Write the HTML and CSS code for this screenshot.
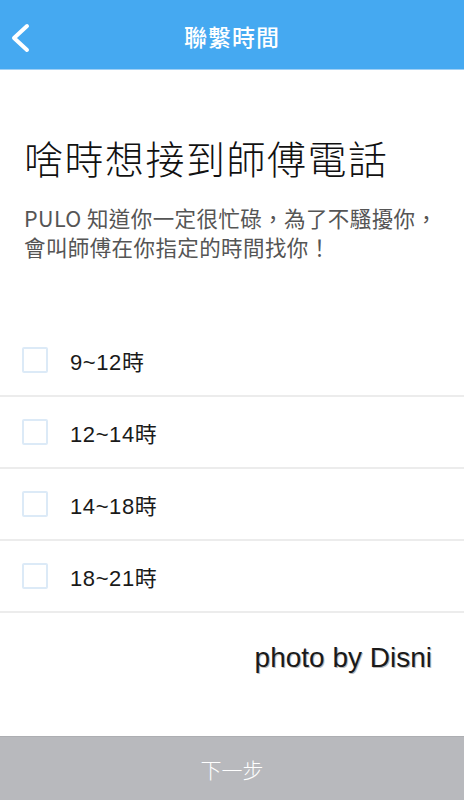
FILE: index.html
```html
<!DOCTYPE html>
<html lang="zh-Hant">
<head>
    <meta charset="UTF-8">
    <title>聯繫時間</title>
    <meta name="viewport" content="width=device-width, initial-scale=1.0">
    <link rel="stylesheet" href="styles.css">
</head>
<body>
    <div class="app">
        <header class="topbar">
            <svg class="back" width="24" height="32" viewBox="0 0 24 32">
                <polyline points="18,4 5,16 18,28" fill="none" stroke="#fff" stroke-width="4" stroke-linecap="round" stroke-linejoin="round"/>
            </svg>
            <div class="topbar-title">聯繫時間</div>
        </header>

        <main class="content">
            <h1 class="heading">啥時想接到師傅電話</h1>
            <p class="intro">PULO 知道你一定很忙碌，為了不騷擾你，<br>會叫師傅在你指定的時間找你！</p>

            <ul class="slots">
                <li class="slot"><span class="box"></span><span class="label">9~12時</span></li>
                <li class="slot"><span class="box"></span><span class="label">12~14時</span></li>
                <li class="slot"><span class="box"></span><span class="label">14~18時</span></li>
                <li class="slot"><span class="box"></span><span class="label">18~21時</span></li>
            </ul>

            <div class="credit">photo by Disni</div>
        </main>

        <button class="next">下一步</button>
    </div>
</body>
</html>
```

FILE: styles.css
```css
body {
    margin: 0;
    padding: 0;
    background: #fff;
    font-family: "Noto Sans CJK TC", "Noto Sans", sans-serif;
}
.app {
    width: 464px;
    height: 800px;
    display: flex;
    flex-direction: column;
}
.topbar {
    height: 69px;
    background: #45a9f1;
    border-bottom: 1px solid #9fd0f5;
    display: flex;
    align-items: center;
    justify-content: center;
    position: relative;
}
.back {
    position: absolute;
    left: 9px;
    top: 22px;
}
.topbar-title {
    color: #fff;
    font-size: 23px;
    font-weight: 500;
    letter-spacing: 1px;
    margin-top: 3px;
}
.content {
    flex: 1;
}
.heading {
    margin: 59px 0 0 24px;
    font-size: 39px;
    font-weight: 300;
    color: #111;
    line-height: 56px;
    letter-spacing: 1.5px;
}
.intro {
    margin: 18px 0 0 24px;
    font-size: 21.5px;
    line-height: 29px;
    color: #555;
    letter-spacing: 0.4px;
}
.slots {
    list-style: none;
    margin: 64px 0 0;
    padding: 0;
}
.slot {
    height: 70px;
    border-bottom: 2px solid #ececec;
    display: flex;
    align-items: center;
}
.box {
    width: 22px;
    height: 22px;
    margin-left: 22px;
    border: 2px solid #dceaf7;
    border-radius: 2px;
}
.label {
    margin-left: 22px;
    font-family: "Liberation Sans", "Noto Sans CJK TC", sans-serif;
    font-size: 22px;
    letter-spacing: 0.6px;
    color: #1a1a1a;
}
.credit {
    text-align: right;
    margin: 29px 32px 0 0;
    font-family: "Liberation Sans", sans-serif;
    font-size: 28px;
    color: #1a1a1a;
    text-shadow: 1px 1px 0 #bbb;
}
.next {
    height: 64px;
    border: none;
    border-top: 1px solid #adaeb2;
    background: #b8b9bd;
    color: #fff;
    font-family: "Noto Sans CJK TC", sans-serif;
    font-size: 21px;
    font-weight: 300;
}
```
